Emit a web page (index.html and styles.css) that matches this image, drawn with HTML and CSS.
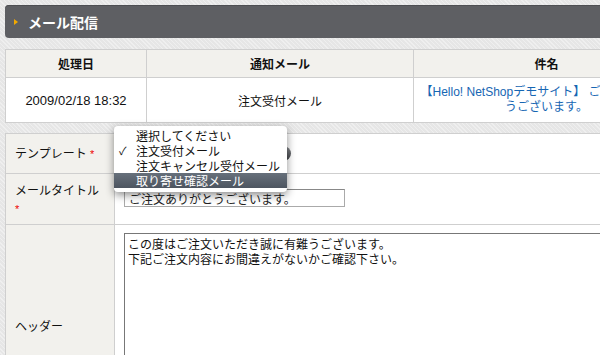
FILE: index.html
```html
<!DOCTYPE html>
<html lang="ja">
<head>
    <meta charset="UTF-8">
    <title>メール配信</title>
    <link rel="stylesheet" href="styles.css">
</head>
<body>
    <div class="page">
        <div class="title-bar">
            <span class="arrow"></span>
            <h2>メール配信</h2>
        </div>

        <table class="list">
            <tr>
                <th class="c-date">処理日</th>
                <th class="c-type">通知メール</th>
                <th class="c-subject">件名</th>
            </tr>
            <tr>
                <td>2009/02/18 18:32</td>
                <td>注文受付メール</td>
                <td><a href="#">【Hello! NetShopデモサイト】 ご注文ありがとうございます。</a></td>
            </tr>
        </table>

        <table class="form">
            <tr class="row-template">
                <th>テンプレート <span class="req">*</span></th>
                <td>
                    <div class="select-wrap">
                        <div class="select-btn"></div>
                        <ul class="menu">
                            <li>選択してください</li>
                            <li class="checked">注文受付メール</li>
                            <li>注文キャンセル受付メール</li>
                            <li class="active">取り寄せ確認メール</li>
                        </ul>
                    </div>
                </td>
            </tr>
            <tr class="row-title">
                <th>メールタイトル <span class="req">*</span></th>
                <td><input class="text" type="text" value="ご注文ありがとうございます。"></td>
            </tr>
            <tr class="row-header">
                <th>ヘッダー</th>
                <td><textarea class="area">この度はご注文いただき誠に有難うございます。
下記ご注文内容にお間違えがないかご確認下さい。</textarea></td>
            </tr>
        </table>
    </div>
</body>
</html>
```

FILE: styles.css
```css
html, body {
    margin: 0;
    padding: 0;
    overflow: hidden;
}

body {
    background-color: #e6e6e6;
    background-image: repeating-linear-gradient(45deg, rgba(255,255,255,0.35) 0 1px, transparent 1px 3px);
    font-family: "Liberation Sans", "Noto Sans CJK JP", sans-serif;
    font-size: 12px;
    color: #111;
}

.page {
    width: 700px;
    padding: 5px 0 0 5px;
}

.title-bar {
    display: flex;
    align-items: center;
    height: 33px;
    background: #5e5f63;
    border-radius: 4px 0 0 4px;
    box-shadow: inset 0 1px 0 #4e4f53;
}

.arrow {
    width: 0;
    height: 0;
    margin: 1px 0 0 9px;
    border-top: 3px solid transparent;
    border-bottom: 3px solid transparent;
    border-left: 4px solid #f2a900;
}

.title-bar h2 {
    margin: 0 0 0 10px;
    color: #fff;
    font-size: 14px;
    font-weight: bold;
}

table {
    border-collapse: collapse;
    table-layout: fixed;
    background: #fff;
}

.list {
    margin-top: 11px;
    width: 675px;
}

.list th,
.list td {
    border: 1px solid #cfcfcf;
    text-align: center;
}

.list th {
    height: 27px;
    padding: 0;
    background: #f2f1ed;
    font-weight: bold;
}

.list td {
    height: 44px;
    padding: 0 5px;
    font-size: 13px;
    line-height: 15px;
}

.list td:nth-child(2) {
    font-family: "Noto Sans CJK JP", sans-serif;
    font-size: 12px;
}

.list td:nth-child(3) {
    font-size: 12px;
}

.c-date {
    width: 140px;
}

.c-type {
    width: 266px;
}

.list a {
    color: #1666b3;
    text-decoration: none;
}

.form {
    margin-top: 10px;
    width: 700px;
}

.form th,
.form td {
    border: 1px solid #cfcfcf;
    text-align: left;
    vertical-align: top;
}

.form th {
    width: 89px;
    padding: 0 10px 0 9px;
    background: #f2f1ed;
    font-weight: normal;
    font-size: 12px;
    line-height: 18px;
}

.form td {
    padding: 0 0 0 8px;
}

.req {
    color: #e00;
    font-size: 11px;
}

.row-template {
    height: 40px;
}

.row-template th,
.row-template td {
    vertical-align: middle;
}

.row-title {
    height: 51px;
}

.row-title th {
    padding-top: 8px;
}

.row-title td {
    padding-top: 15px;
}

.row-header {
    height: 170px;
}

.row-header th {
    padding-top: 93px;
}

.row-header td {
    padding-top: 8px;
}

.select-wrap {
    position: relative;
    height: 16px;
}

.select-btn {
    width: 168px;
    height: 15px;
    border-radius: 8px;
    background: linear-gradient(#8a8c90, #3f4146);
}

.menu {
    position: absolute;
    left: -9px;
    top: -20px;
    width: 173px;
    margin: 0;
    padding: 2px 0 4px;
    list-style: none;
    background: #fff;
    border-radius: 4px;
    box-shadow: 0 3px 9px rgba(0, 0, 0, 0.45);
    font-family: "Noto Sans CJK JP", sans-serif;
    font-size: 12px;
    line-height: 15px;
    color: #111;
}

.menu li {
    padding-left: 22px;
    position: relative;
}

.menu .checked::before {
    content: "✓";
    position: absolute;
    left: 5px;
    font-size: 11px;
}

.menu .active {
    background: linear-gradient(#67707b, #4d5560);
    color: #fff;
}

.text {
    display: block;
    width: 211px;
    height: 16px;
    margin: 0 0 0 1px;
    padding: 0 4px;
    border: 1px solid #aaa;
    border-top-color: #888;
    font-family: "Noto Sans CJK JP", sans-serif;
    font-size: 12px;
    color: #222;
    background: #fff;
}

.area {
    display: block;
    width: 560px;
    height: 160px;
    margin-left: 1px;
    padding: 2px 3px;
    border: 1px solid #777;
    font-family: "Noto Sans CJK JP", sans-serif;
    font-size: 12px;
    line-height: 15px;
    color: #111;
    resize: none;
}
```
